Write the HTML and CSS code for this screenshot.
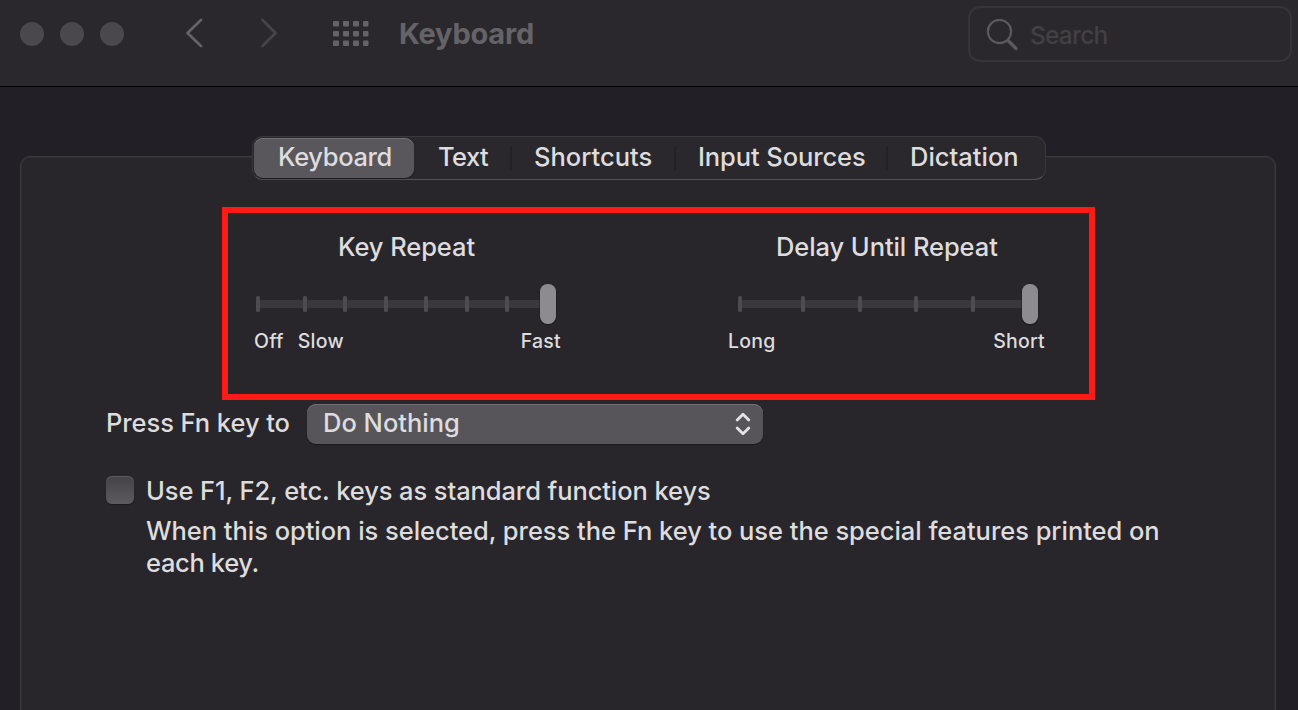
FILE: index.html
```
<!DOCTYPE html>
<html lang="en">
<head>
<meta charset="utf-8">
<title>Keyboard</title>
<link rel="stylesheet" href="styles.css">
</head>
<body>
<header class="toolbar">
  <div class="lights"><i></i><i></i><i></i></div>
  <svg class="nav" width="110" height="40" viewBox="0 0 110 40" fill="none" stroke-width="2.7" stroke-linecap="round" stroke-linejoin="round">
    <path d="M21 6.5 7.500 19.500 21 32.500" stroke="#656368" transform="translate(0 .5)"/>
    <path d="M82.500 6.500 95.500 19.500 82.500 32.500" stroke="#47454a" transform="translate(0 .5)"/>
  </svg>
  <svg class="grid" width="36" height="26" viewBox="0 0 36 26" fill="#656368">
    <g id="r"><rect width="6" height="5.500" rx="1"/><rect x="10" width="6" height="5.500" rx="1"/><rect x="20" width="6" height="5.500" rx="1"/><rect x="30" width="5.500" height="5.500" rx="1"/></g>
    <use href="#r" y="10"/><use href="#r" y="19.500"/>
  </svg>
  <h1 class="title">Keyboard</h1>
  <div class="search">
    <svg width="34" height="34" viewBox="0 0 34 34" fill="none" stroke="#5b595e" stroke-linecap="round"><circle cx="13.500" cy="12.500" r="11.600" stroke-width="2.200"/><path d="M22 21.500 30 29.500" stroke-width="3.200"/></svg>
    <span>Search</span>
  </div>
</header>
<main class="panel">
  <nav class="tabs">
    <span class="tab active">Keyboard</span><span class="tab text">Text</span><span class="tab shortcuts">Shortcuts</span><span class="tab sources">Input Sources</span><span class="tab dictation">Dictation</span>
  </nav>
  <section class="highlight">
    <div class="slider repeat">
      <h2>Key Repeat</h2>
      <svg width="320" height="46" viewBox="0 0 320 46">
        <path d="M10 19h282v8H10z" fill="#3a383d"/>
        <g fill="#4d4b50"><rect x="8" y="15" width="4" height="16" rx="1.500"/><rect x="55" y="15" width="4" height="16" rx="1.500"/><rect x="95" y="15" width="4" height="16" rx="1.500"/><rect x="136" y="15" width="4" height="16" rx="1.500"/><rect x="176" y="15" width="4" height="16" rx="1.500"/><rect x="217" y="15" width="4" height="16" rx="1.500"/><rect x="257" y="15" width="4" height="16" rx="1.500"/></g>
        <rect x="291.500" y="3.500" width="17" height="41" rx="8" fill="#1d1b20"/><rect x="292" y="3" width="16" height="40" rx="7.500" fill="#8d8b90"/>
      </svg>
      <div class="labels"><span class="off">Off</span><span class="slow">Slow</span><span class="fast">Fast</span></div>
    </div>
    <div class="slider delay">
      <h2>Delay Until Repeat</h2>
      <svg width="320" height="46" viewBox="0 0 320 46">
        <path d="M12 19h282v8H12z" fill="#3a383d"/>
        <g fill="#4d4b50"><rect x="10" y="15" width="4" height="16" rx="1.500"/><rect x="73" y="15" width="4" height="16" rx="1.500"/><rect x="130" y="15" width="4" height="16" rx="1.500"/><rect x="186" y="15" width="4" height="16" rx="1.500"/><rect x="243" y="15" width="4" height="16" rx="1.500"/></g>
        <rect x="293.500" y="3.500" width="17" height="41" rx="8" fill="#1d1b20"/><rect x="294" y="3" width="16" height="40" rx="7.500" fill="#8d8b90"/>
      </svg>
      <div class="labels"><span class="long">Long</span><span class="short">Short</span></div>
    </div>
  </section>
  <div class="fn-row">
    <span class="fn-label">Press Fn key to</span>
    <div class="select"><span>Do Nothing</span>
      <svg width="16" height="24" viewBox="0 0 16 24" fill="none" stroke="#e4e3e5" stroke-width="2.800" stroke-linecap="round" stroke-linejoin="round"><path d="M2.200 8 8 2.200 13.800 8M2.200 16 8 21.800 13.800 16"/></svg>
    </div>
  </div>
  <div class="option">
    <i class="checkbox"></i>
    <div>
      <p class="opt-title">Use F1, F2, etc. keys as standard function keys</p>
      <p class="opt-help"><span class="line1">When this option is selected, press the Fn key to use the special features printed on</span><br><span class="line2">each key.</span></p>
    </div>
  </div>
</main>
</body>
</html>
```
FILE: styles.css
```
* { box-sizing: border-box; }
body {
  margin: 0;
  height: 710px;
  overflow: hidden;
  background: #221f26;
  color: #dddcde;
  font: 450 25.5px/32px Inter, "Liberation Sans", sans-serif;
  white-space: nowrap;
  display: flex;
  flex-direction: column;
}
h1, h2, p { margin: 0; font-weight: inherit; font-size: inherit; }
svg { display: block; flex: none; }

.toolbar {
  flex: none;
  height: 87px;
  background: #2a282c;
  border-bottom: 1px solid #000;
  display: flex;
  align-items: flex-start;
  padding: 6px 6px 0 20px;
}
.lights { display: flex; gap: 16px; padding-top: 16px; }
.lights i { width: 24px; height: 24px; border-radius: 50%; background: #4a474d; }
.nav { margin: 7px 0 0 56px; }
.grid { margin: 15px 0 0 43px; }
.title {
  margin: 12px 0 0 30px;
  font-size: 29px;
  font-weight: 700;
  color: #656368;
  letter-spacing: -0.2px;
}
.search {
  margin-left: auto;
  width: 324px;
  height: 56px;
  border: 2px solid #363439;
  border-radius: 12px;
  display: flex;
  padding: 11px 0 0 16px;
  gap: 10px;
  color: #424045;
  font-size: 24.5px;
  letter-spacing: -0.8px;
}

.panel {
  flex: none;
  width: 1256px;
  height: 570px;
  margin: 69px 0 0 20px;
  background: #28262b;
  border: 1px solid #3c3a3f;
  border-radius: 10px;
  box-shadow: inset 0 0 0 1px #302e33;
}
.tabs {
  display: flex;
  width: 794px;
  height: 44px;
  margin: -21px 0 0 231px;
  padding: 1px;
  background: #2a282d;
  border: 1px solid #3a383d;
  border-bottom-color: #535156;
  border-radius: 11px;
}
.tab { position: relative; height: 40px; line-height: 37px; }
.active {
  width: 160px;
  padding-left: 24px;
  letter-spacing: -0.35px;
  background: #59575c;
  border-radius: 9px;
  box-shadow: inset 0 1px 0 #747277, 0 1px 1px #1d1b20;
}
.text { width: 98px; padding-left: 24px; letter-spacing: -0.6px; }
.shortcuts { width: 164px; padding-left: 22px; }
.sources { width: 212px; padding-left: 22px; letter-spacing: -0.1px; }
.dictation { padding-left: 22px; }
.text::after, .shortcuts::after, .sources::after {
  content: "";
  position: absolute;
  right: 0;
  top: 8px;
  width: 2px;
  height: 24px;
  background: #242227;
}

.highlight {
  width: 873px;
  height: 193px;
  margin: 27px 0 0 201px;
  border: 6px solid #ff1a16;
  display: flex;
  padding: 18px 0 0 20px;
}
.slider { width: 320px; }
.delay { margin-left: 160px; }
.slider h2 { padding-left: 90px; letter-spacing: -0.08px; }
.delay h2 { padding-left: 48px; }
.slider svg { margin-top: 18px; }
.labels { display: flex; font-size: 19.500px; line-height: 24px; padding-left: 6px; margin-top: 2px; letter-spacing: 0.25px; }
.slow { margin-left: 14px; }
.fast { margin-left: auto; margin-right: 7px; }
.delay .labels { padding-left: 0; }
.short { margin-left: auto; margin-right: 3px; }

.fn-row { display: flex; margin: 4px 0 0 85px; height: 40px; line-height: 38px; }
.fn-label { width: 201px; letter-spacing: -0.07px; }
.select {
  width: 456px;
  height: 40px;
  padding: 0 12px 0 16px;
  display: flex;
  justify-content: space-between;
  background: #575559;
  border-radius: 9px;
  box-shadow: inset 0 1px 0 #737176, 0 1px 1px #1b191e;
}
.select svg { margin-top: 8px; }
.option { display: flex; margin: 31px 0 0 85px; }
.checkbox {
  width: 28px;
  height: 28px;
  margin: 1px 12px 0 0;
  border-radius: 6px;
  background: linear-gradient(#454348, #5c5a5f);
  box-shadow: inset 0 1px 0 #5c5a5f, 0 1px 1px #1d1b20;
}
.opt-title { letter-spacing: -0.09px; }
.opt-help { margin-top: 8px; letter-spacing: -0.04px; }
.line2 { letter-spacing: -0.35px; }
```
